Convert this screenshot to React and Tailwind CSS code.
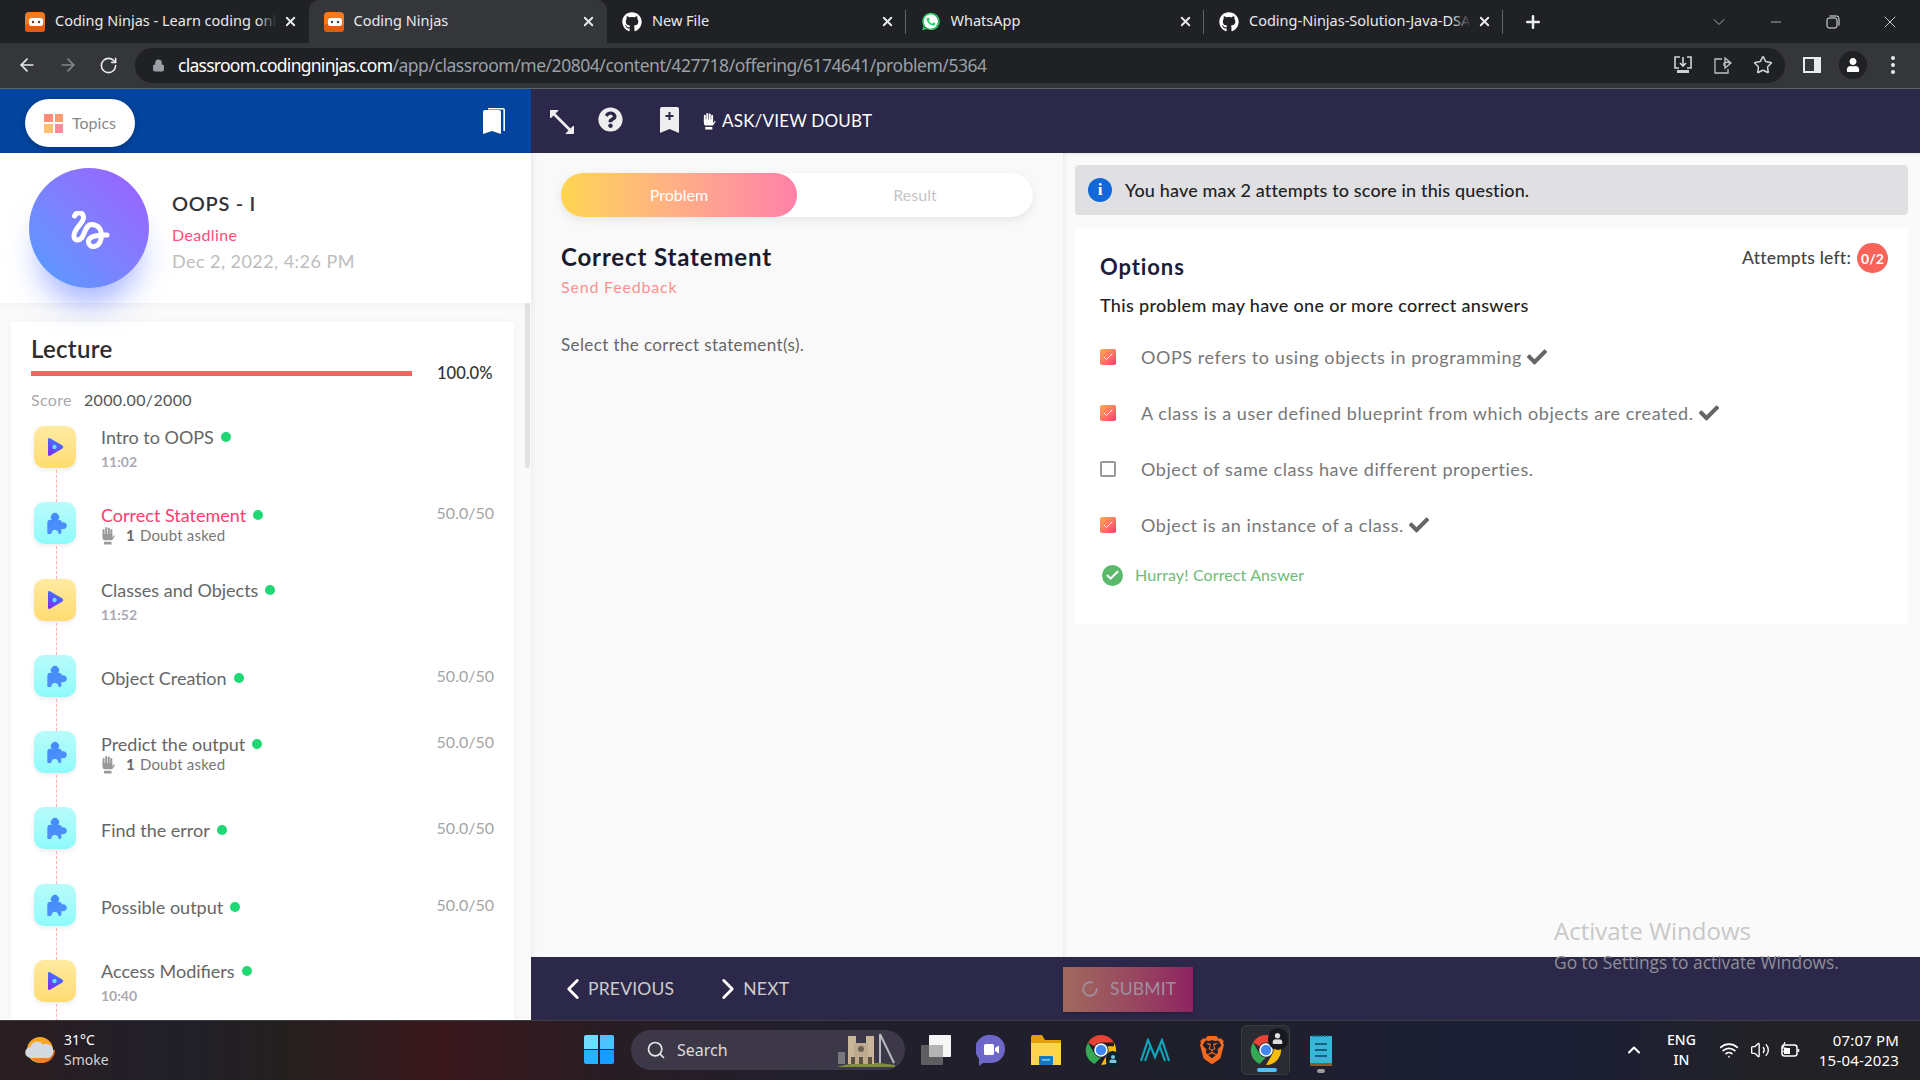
import { ArrowLeft, ArrowRight, RotateCw, Lock, X, Plus, ChevronDown, ChevronLeft, ChevronRight, ChevronUp, Minus, Star, Search, Check, Wifi, Volume2, LoaderCircle } from 'lucide-react';
import { FaGithub, FaCheck, FaQuestionCircle, FaUser } from 'react-icons/fa';
import { SiBrave } from 'react-icons/si';
import { IoLogoWhatsapp } from 'react-icons/io5';

const tabs = [
  { title: 'Coding Ninjas - Learn coding online', icon: 'cn', fade: true },
  { title: 'Coding Ninjas', icon: 'cn', active: true },
  { title: 'New File', icon: 'gh', sep: true },
  { title: 'WhatsApp', icon: 'wa', sep: true },
  { title: 'Coding-Ninjas-Solution-Java-DSA', icon: 'gh', fade: true, sep: true },
];

const lectures = [
  { title: 'Intro to OOPS', kind: 'video', duration: '11:02' },
  { title: 'Correct Statement', kind: 'problem', doubt: true, score: '50.0/50', active: true },
  { title: 'Classes and Objects', kind: 'video', duration: '11:52' },
  { title: 'Object Creation', kind: 'problem', score: '50.0/50' },
  { title: 'Predict the output', kind: 'problem', doubt: true, score: '50.0/50' },
  { title: 'Find the error', kind: 'problem', score: '50.0/50' },
  { title: 'Possible output', kind: 'problem', score: '50.0/50' },
  { title: 'Access Modifiers', kind: 'video', duration: '10:40' },
];

const options = [
  { text: 'OOPS refers to using objects in programming', checked: true },
  { text: 'A class is a user defined blueprint from which objects are created.', checked: true },
  { text: 'Object of same class have different properties.', checked: false },
  { text: 'Object is an instance of a class.', checked: true },
];

function NinjaIcon() {
  return (
    <svg width="20" height="20" viewBox="0 0 20 20" className="shrink-0">
      <rect width="20" height="20" rx="4" fill="#f47a20" />
      <rect x="0" y="12" width="20" height="8" rx="3" fill="#e8590c" />
      <rect x="4" y="6" width="14" height="8" rx="2.5" fill="#fff" />
      <circle cx="8" cy="10" r="1.2" fill="#444" />
      <circle cx="14" cy="10" r="1.2" fill="#444" />
    </svg>
  );
}

function WhatsappIcon() {
  return (
    <span className="relative flex h-5 w-5 shrink-0 items-center justify-center">
      <span className="absolute h-[15px] w-[15px] rounded-full bg-white" />
      <IoLogoWhatsapp className="relative h-[21px] w-[21px] text-[#25d366]" />
    </span>
  );
}

function TabIcon({ icon }) {
  if (icon === 'cn') return <NinjaIcon />;
  if (icon === 'wa') return <WhatsappIcon />;
  return <FaGithub className="h-5 w-5 shrink-0 text-white" />;
}

function BrowserTab({ tab }) {
  return (
    <div className={`relative flex h-[43px] w-[298.5px] shrink-0 items-center pl-[15px] pr-[11px] ${tab.active ? 'rounded-t-[10px] bg-[#35363a]' : ''}`}>
      <TabIcon icon={tab.icon} />
      <div className="relative mb-[2px] ml-[10px] min-w-0 flex-1 overflow-hidden whitespace-nowrap text-[14.5px] text-[#e8eaed]">
        {tab.title}
        {tab.fade && <span className="absolute inset-y-0 right-0 w-5 bg-linear-to-r from-transparent to-[#202124]" />}
      </div>
      <X size={15} strokeWidth={3} className="ml-[6px] shrink-0 text-[#e8eaed]" />
      {tab.sep && <span className="absolute right-0 top-[10px] h-[24px] w-px bg-[#5f6368]" />}
    </div>
  );
}

function ChromeTabs() {
  return (
    <div className="flex h-[43px] items-center bg-[#202124] pl-[10px]">
      {tabs.map((t) => <BrowserTab key={t.title} tab={t} />)}
      <Plus size={20} strokeWidth={3} className="ml-[20px] text-[#e8eaed]" />
      <ChevronDown size={20} strokeWidth={1} className="ml-[166px] text-[#bdc1c6]" />
      <Minus size={16} strokeWidth={1} className="ml-[39px] text-[#e8eaed]" />
      <svg width="14" height="14" viewBox="0 0 14 14" fill="none" stroke="#e8eaed" className="ml-[42px]">
        <rect x="1" y="3" width="10" height="10" rx="2" />
        <path d="M3.5 1h7a2.5 2.5 0 0 1 2.5 2.5v7" />
      </svg>
      <X size={20} strokeWidth={1} className="ml-[40px] text-[#e8eaed]" />
    </div>
  );
}

function ChromeToolbar() {
  return (
    <div className="flex h-[46px] items-center border-b border-[#5f6368] bg-[#35363a] pb-[1px] pl-[17px]">
      <ArrowLeft size={20} strokeWidth={2} className="text-[#e8eaed]" />
      <ArrowRight size={20} strokeWidth={2} className="ml-[21px] text-[#85888c]" />
      <RotateCw size={19} strokeWidth={2} className="ml-[21px] text-[#e8eaed]" />
      <div className="ml-[17px] flex h-[35px] w-[1650px] items-center rounded-full bg-[#202124] pl-[17px]">
        <Lock size={13} fill="#9aa0a6" strokeWidth={2} className="text-[#9aa0a6]" />
        <div className="ml-[13px] flex-1 whitespace-nowrap text-[17.5px] tracking-[-0.46px] text-[#9aa0a6]">
          <span className="tracking-[-0.73px] text-white">classroom.codingninjas.com</span>/app/classroom/me/20804/content/427718/offering/6174641/problem/5364
        </div>
        <svg width="20" height="20" viewBox="0 0 20 20" fill="none" stroke="#d0d3d7" strokeWidth="1.6" className="mr-[20px]">
          <path d="M7 2H2v11h4M14 2h4v11h-4M10 2v9M7 8l3 3 3-3" />
          <rect x="4" y="15" width="12" height="3" fill="#d0d3d7" stroke="none" />
        </svg>
        <svg width="20" height="20" viewBox="0 0 20 20" fill="none" stroke="#bdc1c6" strokeWidth="1.3" className="mr-[20px]">
          <path d="M9 4H2v14h13v-4M11 11V8c2-1 4-1 6 0M12 3l6 5-6 5z" />
        </svg>
        <Star size={20} strokeWidth={1.8} className="mr-[12px] text-[#d0d3d7]" />
      </div>
      <svg width="18" height="16" viewBox="0 0 18 16" className="ml-[18px]">
        <rect width="18" height="16" fill="#e8eaed" />
        <rect x="2" y="2" width="9" height="12" fill="#35363a" />
      </svg>
      <span className="ml-[18px] flex h-[28px] w-[28px] items-center justify-center rounded-full bg-[#202124]">
        <FaUser size={14} className="text-white" />
      </span>
      <div className="ml-[24px] flex flex-col gap-[3px]">
        <span className="h-[4px] w-[4px] rounded-full bg-[#e8eaed]" />
        <span className="h-[4px] w-[4px] rounded-full bg-[#e8eaed]" />
        <span className="h-[4px] w-[4px] rounded-full bg-[#e8eaed]" />
      </div>
    </div>
  );
}

function BookmarkStack() {
  return (
    <svg width="23" height="28" viewBox="0 0 23 28">
      <path d="M5 1h15a2 2 0 0 1 2 2v21h-1.6V2.6H5z" fill="#fff" />
      <path d="M0 5a2 2 0 0 1 2-2h14a2 2 0 0 1 2 2v22l-9-3-9 3z" fill="#fff" />
    </svg>
  );
}

function PuzzleIcon() {
  return (
    <svg width="22" height="22" viewBox="1 0 18.5 21" className="ml-[3px]">
      <defs>
        <linearGradient id="pz" x1="0" y1="0" x2="0.4" y2="1">
          <stop offset="0" stopColor="#3f8cff" />
          <stop offset="1" stopColor="#4f8ff7" />
        </linearGradient>
      </defs>
      <path d="M1 19.5V10.5Q1 7.5 4 7.5H5.4A3.9 3.9 0 1 1 11.2 7.5H12Q14.6 7.5 15.2 10A3.3 3.3 0 1 1 15.2 16.2H14.4V19.5A1.5 1.5 0 0 1 11.4 19.5A3.3 3.3 0 0 0 5 19.5A2 2 0 0 1 1 19.5Z" fill="url(#pz)" />
    </svg>
  );
}

function PlayIcon() {
  return (
    <svg width="17" height="20" viewBox="0 0 17 20">
      <defs>
        <linearGradient id="pl" x1="0.7" y1="0" x2="0.2" y2="1">
          <stop offset="0" stopColor="#3d7dff" />
          <stop offset="1" stopColor="#7a2cf5" />
        </linearGradient>
      </defs>
      <path d="M1 2.5Q1 .5 3 1.2L15.5 8.4Q17 10 15.5 11.6L3 18.8Q1 19.5 1 17.5Z" fill="url(#pl)" />
      <circle cx="7.5" cy="10" r="2.2" fill="#5fe2ff" />
    </svg>
  );
}

function HandIcon({ className }) {
  return (
    <svg viewBox="0 0 14 19" className={className} fill="currentColor">
      <rect x="1.6" y="3" width="2" height="8" rx="1" />
      <rect x="4.2" y="1" width="2" height="9" rx="1" />
      <rect x="6.8" y="1.5" width="2" height="9" rx="1" />
      <rect x="9.3" y="3" width="2" height="8" rx="1" />
      <path d="M1.6 8h9.7v3.5l2-2.2 .7.8-2.8 4.2H3.5Q1.6 14.3 1.6 11Z" />
      <rect x="3" y="15.8" width="7.5" height="2.7" />
    </svg>
  );
}

function LectureRow({ item }) {
  const titleColor = item.active ? 'text-[#ff3d6e]' : 'text-[#666]';
  const title = (
    <div className={`flex h-[22px] items-center gap-[7px] text-[18px] leading-[22px] ${titleColor}`}>
      {item.title}
      <span className="h-[10px] w-[10px] rounded-full bg-[#1fd873]" />
    </div>
  );
  const plain = !item.duration && !item.doubt;
  return (
    <div className="flex h-[76.3px]">
      <div className="flex w-[42px] shrink-0 flex-col items-center">
        <div className={`flex h-[42px] w-[42px] shrink-0 items-center justify-center rounded-[10px] shadow-[0_2px_5px_rgba(0,0,0,0.08)] ${item.kind === 'video' ? 'bg-linear-to-b from-[#ffeaa0] to-[#ffdc70]' : 'bg-linear-to-b from-[#b8fbfb] to-[#8efafa]'}`}>
          {item.kind === 'video' ? <PlayIcon /> : <PuzzleIcon />}
        </div>
        <span className="ml-[3px] mt-[2px] w-0 flex-1 border-l border-dashed border-[#ffb0b0]" />
      </div>
      <div className={`ml-[25px] flex-1 ${plain ? 'pt-[12px]' : item.doubt ? 'pt-[2px]' : ''}`}>
        {title}
        {item.duration && <div className="mt-[5px] text-[14px] font-bold leading-[18px] text-[#a9a9b5]">{item.duration}</div>}
        {item.doubt && (
          <div className="mt-[-1px] flex h-[20px] items-center text-[15px] leading-[18px] tracking-[0.2px] text-[#777]">
            <HandIcon className="h-[19px] w-[14px] text-[#999]" />
            <b className="ml-[11px] mr-[5px] font-bold text-[#666]">1</b>Doubt asked
          </div>
        )}
      </div>
      {item.score && (
        <div className={`w-[60px] text-right text-[16px] leading-[20px] text-[#a5a5a5] ${plain ? 'pt-[11px]' : 'pt-[1px]'}`}>{item.score}</div>
      )}
    </div>
  );
}

function Sidebar() {
  return (
    <div className="flex w-[531px] shrink-0 flex-col">
      <div className="flex h-[64px] shrink-0 items-center justify-between bg-[#03449e] pl-[25px] pr-[25px]">
        <div className="mt-[4px] flex h-[48px] w-[110px] items-center gap-[9px] rounded-full bg-white pl-[19px] shadow-[0_2px_6px_rgba(0,0,0,0.2)]">
          <div className="grid grid-cols-2 gap-[2px]">
            <span className="h-[8.5px] w-[8.5px] bg-[#ff8a7a]" />
            <span className="h-[8.5px] w-[8.5px] bg-[#ff9a70]" />
            <span className="h-[8.5px] w-[8.5px] bg-[#ffc070]" />
            <span className="h-[8.5px] w-[8.5px] bg-[#ff8a9a]" />
          </div>
          <span className="text-[16px] text-[#888]">Topics</span>
        </div>
        <BookmarkStack />
      </div>
      <div className="relative z-10 flex h-[150px] shrink-0 items-center bg-white pl-[29px] shadow-[0_2px_6px_rgba(0,0,0,0.04)]">
        <div className="flex h-[120px] w-[120px] items-center justify-center rounded-full bg-linear-to-tr from-[#4a9dff] to-[#9c5cff] shadow-[0_26px_30px_-10px_rgba(80,110,255,0.5)]">
          <svg width="40" height="40" viewBox="0 0 40 40" fill="none" stroke="#fff" strokeWidth="5" strokeLinecap="round" strokeLinejoin="round" className="ml-[4px] mt-[6px]">
            <path d="M3.5 5C5 1 12 0 12.5 6.5C13 12 2 18 3 25.5C3.500 30 8 30 11 26.500C14 22 15 13 21 13.500C27 14 32 18 30 28C28 37 18 38 17.500 31C17 25 27 24 36 24" />
          </svg>
        </div>
        <div className="ml-[23px] mt-[6px]">
          <div className="text-[20px] font-semibold leading-[26px] tracking-[0.7px] text-[#333]">OOPS - I</div>
          <div className="mt-[9px] text-[16px] leading-[20px] tracking-[0.35px] text-[#ff4d78]">Deadline</div>
          <div className="mt-[5px] text-[18px] leading-[22px] tracking-[0.45px] text-[#bdbdbd]">Dec 2, 2022, 4:26 PM</div>
        </div>
      </div>
      <div className="relative flex-1 overflow-hidden bg-[#fafafa] pl-[11px] pt-[19px]">
        <div className="w-[503px] bg-white pl-[20px] pr-[20px] pt-[12px] shadow-[0_0_8px_rgba(0,0,0,0.04)]">
          <div className="text-[24px] font-semibold leading-[30px] tracking-[0.3px] text-[#2d2d2d]">Lecture</div>
          <div className="flex h-[18px] items-center">
            <div className="h-[5px] w-[381px] bg-[#ff6161]" />
            <div className="ml-[25px] text-[16.5px] font-medium text-[#333]">100.0%</div>
          </div>
          <div className="mt-[8px] flex h-[20px] items-center gap-[12px] text-[16px] leading-[20px] tracking-[0.35px]">
            <span className="text-[#aaa]">Score</span>
            <span className="text-[#555]">2000.00/2000</span>
          </div>
          <div className="ml-[3px] mt-[16px]">
            {lectures.map((item) => <LectureRow key={item.title} item={item} />)}
          </div>
        </div>
        <span className="absolute right-[1px] top-0 h-[165px] w-[5px] rounded-sm bg-[#e2e2e2]" />
      </div>
    </div>
  );
}

function ProblemPane() {
  return (
    <div className="w-[532px] shrink-0 bg-[#f9f9f9] px-[30px] pt-[20px] shadow-[inset_8px_0_8px_-8px_rgba(0,0,0,0.08)]">
      <div className="flex h-[44px] w-[472px] rounded-full bg-white text-[16px] shadow-[0_3px_8px_rgba(0,0,0,0.08)]">
        <div className="flex w-[236px] items-center justify-center rounded-full bg-linear-to-r from-[#ffd54f] to-[#ff80a8] text-white">Problem</div>
        <div className="flex flex-1 items-center justify-center text-[#c5c5c5]">Result</div>
      </div>
      <div className="mt-[25px] text-[24px] font-bold leading-[30px] tracking-[0.85px] text-[#1a1a2e]">Correct Statement</div>
      <div className="mt-[5px] text-[16px] leading-[20px] tracking-[0.8px] text-[#ff8f8f]">Send Feedback</div>
      <div className="mt-[37px] text-[17px] leading-[22px] tracking-[0.39px] text-[#666]">Select the correct statement(s).</div>
    </div>
  );
}

function OptionRow({ option }) {
  return (
    <div className="flex h-[56px] items-center">
      {option.checked ? (
        <span className="flex h-4 w-4 items-center justify-center rounded-[2px] bg-linear-to-br from-[#ffa94d] to-[#ff2f6e]">
          <Check size={12} strokeWidth={2} className="text-white" />
        </span>
      ) : (
        <span className="h-4 w-4 rounded-[2px] border-2 border-[#999] bg-white" />
      )}
      <span className="ml-[25px] text-[18px] tracking-[0.57px] text-[#777]">{option.text}</span>
      {option.checked && <FaCheck size={20} className="ml-[5px] text-[#666]" />}
    </div>
  );
}

function AnswerPane() {
  return (
    <div className="flex-1 bg-[#fafafa] px-[12px] pt-[12px] shadow-[inset_4px_0_6px_-4px_rgba(0,0,0,0.1),inset_0_4px_4px_-4px_rgba(0,0,0,0.1)]">
      <div className="flex h-[50px] items-center rounded-[4px] bg-[#e0e0e3] pl-[13px]">
        <span className="flex h-[24px] w-[24px] items-center justify-center rounded-full bg-[#1268d8] font-['Liberation_Serif',serif] text-[17px] font-bold text-white">i</span>
        <span className="ml-[13px] text-[18px] font-medium tracking-[0.14px] text-[#222]">You have max 2 attempts to score in this question.</span>
      </div>
      <div className="mt-[13px] h-[396px] bg-white pl-[25px]">
        <div className="flex items-start justify-between pr-[20px] pt-[15px]">
          <div className="mt-[9px] text-[22px] font-bold leading-[30px] tracking-[0.9px] text-[#1d1d3a]">Options</div>
          <div className="flex h-[30px] items-center">
            <span className="text-[17.5px] font-medium tracking-[0.2px] text-[#444]">Attempts left:</span>
            <span className="ml-[6px] flex h-[30px] w-[31px] items-center justify-center rounded-full bg-[#f9635a] text-[14px] font-bold text-white">0/2</span>
          </div>
        </div>
        <div className="mt-[11px] text-[18px] font-medium leading-[24px] tracking-[0.32px] text-[#222]">This problem may have one or more correct answers</div>
        <div className="mt-[12px]">
          {options.map((o) => <OptionRow key={o.text} option={o} />)}
        </div>
        <div className="mt-[10px] flex h-[24px] items-center pl-[2px]">
          <span className="flex h-[21px] w-[21px] items-center justify-center rounded-full bg-[#5cb96c]">
            <Check size={15} strokeWidth={3.2} className="text-white" />
          </span>
          <span className="ml-[12px] text-[16px] tracking-[0.12px] text-[#6dbb78]">Hurray! Correct Answer</span>
        </div>
      </div>
    </div>
  );
}

function DoubtBar() {
  return (
    <div className="flex h-[64px] shrink-0 items-center bg-[#2c2849] pl-[18px]">
      <svg width="26" height="26" viewBox="0 0 26 26" fill="none" stroke="#eee" strokeWidth="2.6" className="mt-[2px]">
        <path d="M4 4l18 18" />
        <path d="M1.5 9V1.5H9zM24.5 17v7.5H17z" fill="#eee" strokeWidth="1" />
      </svg>
      <FaQuestionCircle size={25} className="mb-[3px] ml-[23px] text-[#eee]" />
      <svg width="19" height="26" viewBox="0 0 19 26" className="mb-[3px] ml-[37px]">
        <path d="M0 2a2 2 0 0 1 2-2h15a2 2 0 0 1 2 2v24l-9.500-4L0 26z" fill="#eee" />
        <path d="M8.500 5h2v3h3v2h-3v3h-2v-3h-3V8h3z" fill="#2c2849" />
      </svg>
      <HandIcon className="ml-[23px] h-[18px] w-[14px] text-white" />
      <span className="ml-[6px] text-[17px] tracking-[0.2px] text-white">ASK/VIEW DOUBT</span>
    </div>
  );
}

function PagerBar() {
  return (
    <div className="flex h-[63px] shrink-0 items-center bg-[#2c2849]">
      <div className="flex w-[532px] items-center pl-[25px] text-[17.5px] tracking-[0.2px] text-[#ccc]">
        <ChevronLeft size={34} strokeWidth={2} className="text-white" />
        <span className="ml-[-2px] mt-[1px]">PREVIOUS</span>
        <ChevronRight size={34} strokeWidth={2} className="ml-[37px] text-white" />
        <span className="ml-[-2px] mt-[1px]">NEXT</span>
      </div>
      <div className="mt-[1px] flex h-[45px] w-[130px] items-center bg-linear-to-r from-[#a0695c] to-[#8f2260] pl-[18px] text-[17.5px] text-[#a0909f] shadow-[0_2px_4px_rgba(0,0,0,0.2)]">
        <LoaderCircle size={18} strokeWidth={2.4} />
        <span className="ml-[11px] mt-[1px] tracking-[0.2px]">SUBMIT</span>
      </div>
    </div>
  );
}

function ChromeLogo({ size = 32, badge }) {
  return (
    <span className="relative shrink-0">
      <svg width={size} height={size} viewBox="0 0 32 32">
        <path d="M16 1A15 15 0 0 1 29 8.500H16A7.500 7.500 0 0 0 9.500 12.200L3 8.500A15 15 0 0 1 16 1Z" fill="#ea4335" />
        <path d="M3 8.500L9.500 19.800A7.500 7.500 0 0 0 16 23.500L9.500 30A15 15 0 0 1 3 8.500Z" fill="#34a853" />
        <path d="M29 8.500A15 15 0 0 1 16 31L22.500 19.800A7.500 7.500 0 0 0 22.500 12.200H29Z" fill="#fbbc04" />
        <circle cx="16" cy="16" r="6" fill="#4285f4" stroke="#fff" strokeWidth="1.6" />
      </svg>
      {badge}
    </span>
  );
}

function Taskbar() {
  return (
    <div className="flex h-[60px] shrink-0 items-center border-t border-[#3c3b40] bg-[linear-gradient(90deg,#2b1d20_0%,#21202a_9%,#25201f_15%,#3b181d_23%,#281d24_32%,#221f2e_42%,#1f1f2a_60%,#1c2036_78%,#1d2033_84%,#222226_92%,#222226_100%)] pb-[2px] text-white">
      <div className="flex w-[584px] shrink-0 items-center pl-[25px]">
        <svg width="30" height="26" viewBox="0 0 30 26">
          <circle cx="15" cy="13" r="13" fill="#f5a623" />
          <path d="M0 13h30v0a13 13 0 0 1-26 0z" fill="#f47a20" opacity="0.9" />
          <path d="M6 21a5.500 5.500 0 0 1-.5-11A7 7 0 0 1 18 7.500 6.500 6.500 0 0 1 24 21Z" fill="#d5dae0" />
        </svg>
        <div className="ml-[9px] text-[14px] leading-[20px]">
          <div>31°C</div>
          <div className="text-[#d4d4d4]">Smoke</div>
        </div>
      </div>
      <div className="grid h-[29px] w-[30px] shrink-0 grid-cols-2 gap-[1.5px]">
        <span className="rounded-tl-[2px] bg-[#6fdcff]" />
        <span className="rounded-tr-[2px] bg-[#4cc2ff]" />
        <span className="rounded-bl-[2px] bg-[#2bb0ff]" />
        <span className="rounded-br-[2px] bg-[#1a9bff]" />
      </div>
      <div className="relative ml-[17px] flex h-[40px] w-[274px] shrink-0 items-center rounded-full bg-[#3d3848] pl-[15px]">
        <Search size={20} strokeWidth={2} className="text-[#e5e5e5]" />
        <span className="ml-[11px] text-[16px] text-[#dcdcdc]">Search</span>
        <svg width="62" height="34" viewBox="0 0 62 34" className="absolute right-[6px] top-[3px]">
          <path d="M0 34Q26 26 58 32v2z" fill="#7d8f3a" />
          <rect x="11" y="3" width="8" height="28" fill="#c9b59a" />
          <rect x="29" y="3" width="8" height="28" fill="#c9b59a" />
          <rect x="17" y="10" width="14" height="21" fill="#bda98e" />
          <circle cx="24" cy="16" r="3" fill="#6e6255" />
          <rect x="14" y="24" width="4" height="7" fill="#5b5145" />
          <rect x="22" y="24" width="4" height="7" fill="#5b5145" />
          <rect x="31" y="24" width="4" height="7" fill="#5b5145" />
          <path d="M43 1l14 29M43 1v29" stroke="#b8b8bd" strokeWidth="2" fill="none" />
          <rect x="1" y="19" width="7" height="12" fill="#77777c" />
        </svg>
      </div>
      <svg width="30" height="30" viewBox="0 0 30 30" className="ml-[16px] shrink-0">
        <rect x="0" y="10" width="22" height="20" rx="1" fill="#5e5e60" />
        <rect x="8" y="0" width="22" height="22" rx="1" fill="#f6f6f6" />
        <rect x="8" y="10" width="14" height="12" fill="#b4b4b4" />
      </svg>
      <svg width="30" height="32" viewBox="0 0 30 32" className="ml-[25px] shrink-0">
        <path d="M15 1a14 14 0 0 1 0 28H7l-4 3v-7.500A14 14 0 0 1 15 1Z" fill="#6d67c9" />
        <rect x="8" y="10" width="10" height="11" rx="1.500" fill="#fff" />
        <path d="M19 14l4-2.500v8L19 17z" fill="#fff" />
      </svg>
      <svg width="30" height="30" viewBox="0 0 30 30" className="ml-[25px] shrink-0">
        <path d="M0 2q0-2 2-2h9l3 5h16v25H0z" fill="#e0a010" />
        <path d="M0 8h30v22H0z" fill="#fcd34d" />
        <rect x="8" y="21" width="14" height="9" rx="1" fill="#1a78c2" />
        <rect x="11" y="24" width="8" height="1.600" fill="#7cc4f0" />
      </svg>
      <span className="ml-[24px] flex">
        <ChromeLogo badge={<span className="absolute bottom-[-2px] right-[-2px] flex h-[17px] w-[13px] items-center justify-center rounded-full bg-[#0e2330]"><FaUser size={8} className="text-[#7cc4e0]" /></span>} />
      </span>
      <svg width="30" height="24" viewBox="0 0 30 24" fill="none" stroke="#12a3b8" strokeWidth="2.200" className="ml-[23px] shrink-0">
        <path d="M1 23L8 2l7 17 7-17 7 21M5 23L10 9M25 23L20 9" />
      </svg>
      <SiBrave size={28} className="ml-[28px] shrink-0 text-[#f26a21]" />
      <div className="relative ml-[15px] flex h-[50px] w-[49px] shrink-0 items-center justify-center rounded-[5px] border border-[#3a3a40] bg-[#2b2b33]">
        <ChromeLogo badge={<span className="absolute right-[-6px] top-[-6px] flex h-[22px] w-[20px] items-center justify-center rounded-full bg-[#16181d]"><FaUser size={11} className="text-[#ddd]" /></span>} />
        <span className="absolute bottom-[2px] left-[15px] h-[4px] w-[20px] rounded-full bg-[#4cc2ff]" />
      </div>
      <div className="relative ml-[20px] h-[50px] w-[22px] shrink-0">
        <svg width="22" height="32" viewBox="0 0 22 32" className="absolute top-[10px]">
          <rect y="1" width="22" height="30" rx="1" fill="#38b6d8" />
          <rect y="28" width="22" height="3" fill="#8a5a2b" />
          <path d="M5 9h12M5 15h12M5 21h12" stroke="#14627d" strokeWidth="2.200" />
          <path d="M2 1h18" stroke="#0e6b85" strokeWidth="2" strokeDasharray="1.500 1.500" />
        </svg>
        <span className="absolute bottom-[2px] left-[7px] h-[4px] w-[8px] rounded-full bg-[#9a9a9a]" />
      </div>
      <div className="ml-[292px] flex shrink-0 items-center">
        <ChevronUp size={20} strokeWidth={2.4} />
        <div className="ml-[23px] text-center text-[14px] font-medium leading-[20px]">
          <div>ENG</div>
          <div>IN</div>
        </div>
        <Wifi size={20} strokeWidth={2} className="ml-[23px]" />
        <Volume2 size={20} strokeWidth={1.6} className="ml-[11px]" />
        <svg width="20" height="16" viewBox="0 0 20 16" fill="none" stroke="#fff" strokeWidth="1.500" className="ml-[10px]">
          <rect x="2" y="3" width="15" height="11" rx="2.500" />
          <rect x="4" y="6" width="6" height="6" fill="#fff" stroke="none" />
          <path d="M18.500 7v3" />
          <path d="M5 0L2.500 6h3L3.500 10" strokeWidth="1.200" />
        </svg>
        <div className="ml-[19px] text-right text-[15px] leading-[20px] tracking-[0.2px]">
          <div>07:07 PM</div>
          <div>15-04-2023</div>
        </div>
      </div>
    </div>
  );
}

export default function App() {
  return (
    <div className="relative flex h-[1080px] w-[1920px] flex-col overflow-hidden bg-white font-['Noto_Sans',sans-serif]">
      <ChromeTabs />
      <ChromeToolbar />
      <div className="flex min-h-0 flex-1 font-['Lato',sans-serif]">
        <Sidebar />
        <div className="flex min-w-0 flex-1 flex-col">
          <DoubtBar />
          <div className="flex min-h-0 flex-1">
            <ProblemPane />
            <AnswerPane />
          </div>
          <PagerBar />
        </div>
      </div>
      <Taskbar />
      {/* Windows watermark sits over the page */}
      <div className="pointer-events-none absolute left-[1554px] top-[914px] font-['Open_Sans',sans-serif]">
        <div className="text-[24px] leading-[34px] text-[#c8c8c8]">Activate Windows</div>
        <div className="mt-[2px] text-[17.4px] leading-[24px] text-[#8f8f96]">Go to Settings to activate Windows.</div>
      </div>
    </div>
  );
}
